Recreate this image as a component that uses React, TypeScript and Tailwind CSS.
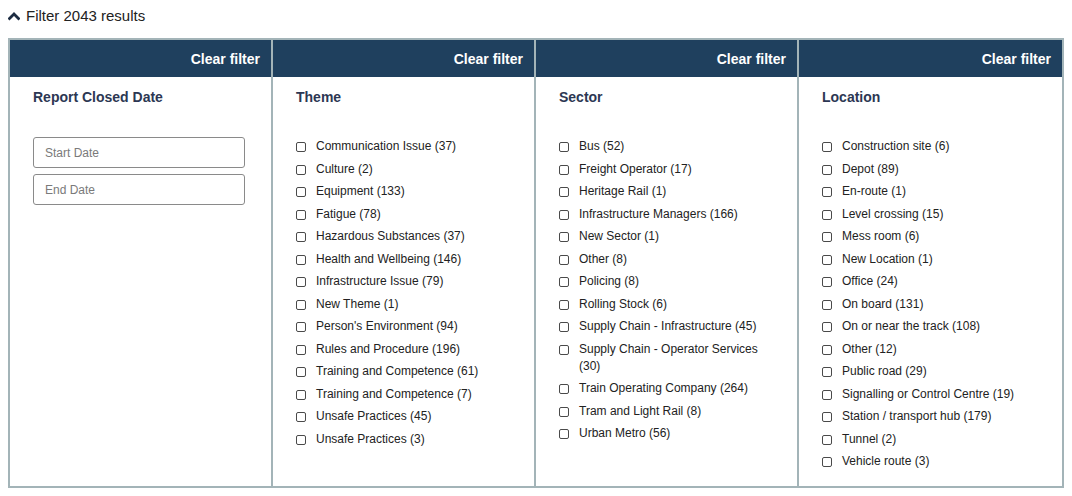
type Item = string;

const theme: Item[] = [
  "Communication Issue (37)",
  "Culture (2)",
  "Equipment (133)",
  "Fatigue (78)",
  "Hazardous Substances (37)",
  "Health and Wellbeing (146)",
  "Infrastructure Issue (79)",
  "New Theme (1)",
  "Person's Environment (94)",
  "Rules and Procedure (196)",
  "Training and Competence (61)",
  "Training and Competence (7)",
  "Unsafe Practices (45)",
  "Unsafe Practices (3)",
];

const sector: Item[] = [
  "Bus (52)",
  "Freight Operator (17)",
  "Heritage Rail (1)",
  "Infrastructure Managers (166)",
  "New Sector (1)",
  "Other (8)",
  "Policing (8)",
  "Rolling Stock (6)",
  "Supply Chain - Infrastructure (45)",
  "Supply Chain - Operator Services (30)",
  "Train Operating Company (264)",
  "Tram and Light Rail (8)",
  "Urban Metro (56)",
];

const location: Item[] = [
  "Construction site (6)",
  "Depot (89)",
  "En-route (1)",
  "Level crossing (15)",
  "Mess room (6)",
  "New Location (1)",
  "Office (24)",
  "On board (131)",
  "On or near the track (108)",
  "Other (12)",
  "Public road (29)",
  "Signalling or Control Centre (19)",
  "Station / transport hub (179)",
  "Tunnel (2)",
  "Vehicle route (3)",
];

function Column({ title, last, children }: { title: string; last?: boolean; children: React.ReactNode }) {
  return (
    <div className={last ? "flex flex-col" : "flex flex-col border-r-2 border-[#a3b4b8]"}>
      <div className="h-[37px] bg-[#1f405e] flex items-center justify-end pr-[11px]">
        <button className="text-white font-bold text-[14px] leading-[16px]">Clear filter</button>
      </div>
      <div className="px-[23px] pt-[12px] pb-[16px]">
        <h3 className="text-[14px] leading-[16px] font-bold text-[#2c3753] mb-[33px]">{title}</h3>
        {children}
      </div>
    </div>
  );
}

function CheckList({ items }: { items: Item[] }) {
  return (
    <ul className="flex flex-col gap-[5.5px]">
      {items.map((it, i) => (
        <li key={i} className="flex items-start gap-[10px] text-[12px] leading-[17px] text-[#222]">
          <span className="mt-[4px] w-[10px] h-[10px] shrink-0 rounded-[2px] border-[1.5px] border-[#4a4a4a] bg-white" />
          <span>{it}</span>
        </li>
      ))}
    </ul>
  );
}

export default function App() {
  return (
    <div className="w-[1072px] h-[496px] bg-white px-[8px]" style={{ fontFamily: '"Liberation Sans", Arial, sans-serif' }}>
      <div className="h-[38px] pt-[6px] flex items-start gap-[6px]">
        <svg width="12" height="20" viewBox="0 0 12 20" className="shrink-0">
          <polyline points="1.5,12.5 6,8 10.5,12.5" fill="none" stroke="#1c2c42" strokeWidth="2.8" strokeLinecap="square" />
        </svg>
        <span className="text-[15px] leading-[20px] text-[#222]">Filter 2043 results</span>
      </div>
      <div className="w-[1056px] border-2 border-[#a3b4b8] grid grid-cols-4">
        <Column title="Report Closed Date">
          <div className="flex flex-col gap-[6px] -mt-[1px]">
            <input
              placeholder="Start Date"
              className="w-[212px] h-[31px] border border-[#8a8a8a] rounded-[3px] px-[11px] text-[12px] text-[#333] placeholder:text-[#7a7a7a] outline-none"
            />
            <input
              placeholder="End Date"
              className="w-[212px] h-[31px] border border-[#8a8a8a] rounded-[3px] px-[11px] text-[12px] text-[#333] placeholder:text-[#7a7a7a] outline-none"
            />
          </div>
        </Column>
        <Column title="Theme">
          <CheckList items={theme} />
        </Column>
        <Column title="Sector">
          <CheckList items={sector} />
        </Column>
        <Column title="Location" last>
          <CheckList items={location} />
        </Column>
      </div>
    </div>
  );
}
